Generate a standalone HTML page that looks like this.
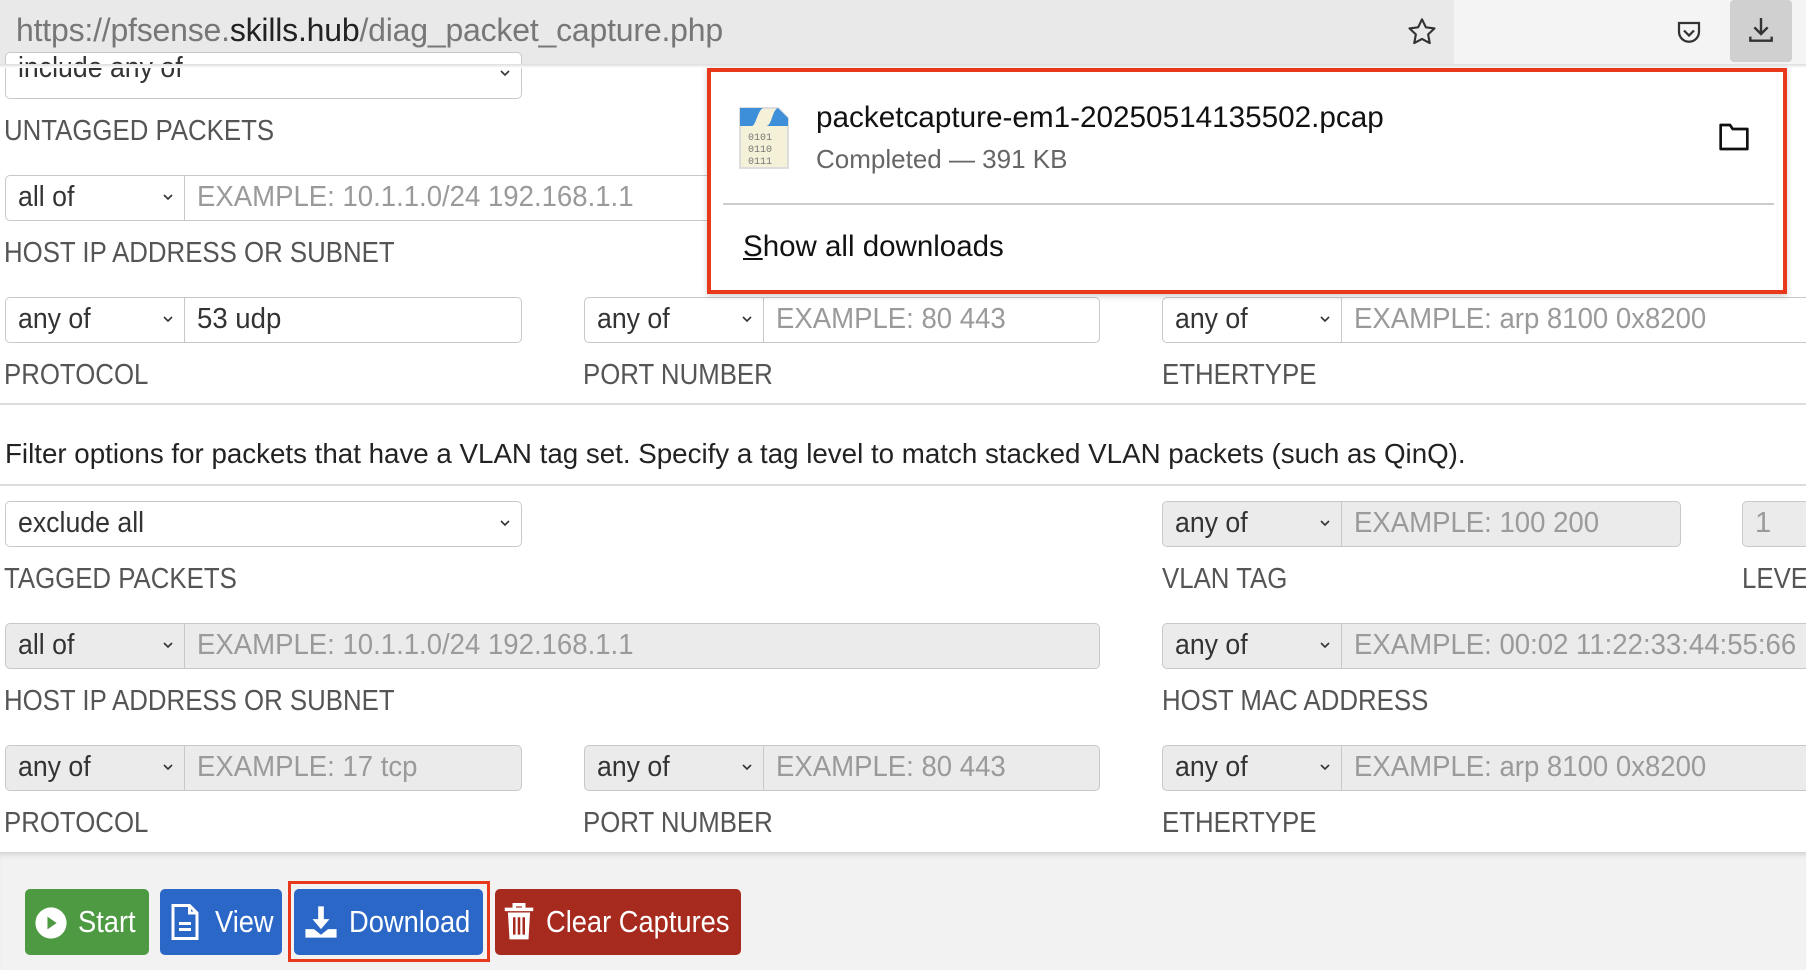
<!DOCTYPE html>
<html><head><meta charset="utf-8"><style>
*{box-sizing:border-box;margin:0;padding:0}
body{width:1806px;height:970px;overflow:hidden;background:#fff;position:relative;font-family:"Liberation Sans",sans-serif;}
.a{position:absolute}
.sel,.inp{position:absolute;height:46px;border:1.5px solid #c8c8c8;background:#fff;font-size:29px;line-height:43px;padding-left:12px;color:#333;white-space:nowrap;overflow:hidden}
.sel{border-radius:5px 0 0 5px}
.inp{border-radius:0 5px 5px 0;color:#9a9a9a;border-left:none}
.inp.full{border-left:1.5px solid #c8c8c8;border-radius:5px}
.sel.full{border-radius:5px}
.g{background:#ebebeb}
.chev{position:absolute;right:10px;top:15px;width:12px;height:12px}
.lab{position:absolute;font-size:29px;color:#555;white-space:nowrap;transform:scaleX(.89);transform-origin:left}
.t{display:inline-block;transform:scaleX(.95);transform-origin:left}
.ts{display:inline-block;transform:scaleX(.92);transform-origin:left}
.btn{position:absolute;top:889px;height:66px;border-radius:5px;color:#fff;font-size:31px;line-height:66px;white-space:nowrap}
.btn span{transform:scaleX(.88);transform-origin:left}
</style></head><body>
<!-- url bar -->
<div class="a" style="left:0;top:0;width:1454px;height:64px;background:#e9e9e9"></div>
<div class="a" style="left:1454px;top:0;width:352px;height:64px;background:#f4f4f4"></div>
<div class="a" style="left:16px;top:12px;font-size:32px;color:#777;white-space:nowrap;letter-spacing:-0.2px">https://pfsense.<span style="color:#222">skills.hub</span>/diag_packet_capture.php</div>
<svg class="a" style="left:1406px;top:16px" width="32" height="32" viewBox="0 0 24 24"><path d="M12 2.5l2.9 6 6.5.8-4.8 4.5 1.2 6.5L12 17.2l-5.8 3.1 1.2-6.5L2.6 9.3l6.5-.8z" fill="none" stroke="#333" stroke-width="1.6" stroke-linejoin="round"/></svg>
<svg class="a" style="left:1674px;top:18px" width="30" height="30" viewBox="0 0 24 24"><path d="M4 4h16v7a8 8 0 0 1-16 0z" fill="none" stroke="#333" stroke-width="1.8"/><path d="M8 10l4 4 4-4" fill="none" stroke="#333" stroke-width="1.8"/></svg>
<div class="a" style="left:1730px;top:0;width:62px;height:62px;background:#d0d0d0;border-radius:4px"></div>
<svg class="a" style="left:1745px;top:14px" width="32" height="32" viewBox="0 0 24 24"><path d="M12 3v12M7 10l5 5 5-5M4 17v3h16v-3" fill="none" stroke="#333" stroke-width="1.8"/></svg>

<!-- row 0 partial -->
<div class="sel full" style="left:5px;top:52px;width:517px;height:47px;line-height:30px"><span class="ts">include any of</span><svg class="chev" viewBox="0 0 12 12" style="top:14px"><path d="M2 4l4 4 4-4" fill="none" stroke="#333" stroke-width="1.6"/></svg></div>
<div class="a" style="left:0;top:64px;width:1806px;height:4px;background:linear-gradient(#ddd,#fff)"></div>
<div class="lab" style="left:4px;top:115px">UNTAGGED PACKETS</div>

<!-- row 1 -->
<div class="sel" style="left:5px;top:175px;width:180px"><span class="ts">all of</span><svg class="chev" viewBox="0 0 12 12"><path d="M2 4l4 4 4-4" fill="none" stroke="#333" stroke-width="1.6"/></svg></div>
<div class="inp" style="left:185px;top:175px;width:915px"><span class="t">EXAMPLE: 10.1.1.0/24 192.168.1.1</span></div>
<div class="lab" style="left:4px;top:237px">HOST IP ADDRESS OR SUBNET</div>

<!-- row 2 -->
<div class="sel" style="left:5px;top:297px;width:180px"><span class="ts">any of</span><svg class="chev" viewBox="0 0 12 12"><path d="M2 4l4 4 4-4" fill="none" stroke="#333" stroke-width="1.6"/></svg></div>
<div class="inp" style="left:185px;top:297px;width:337px;color:#333"><span class="t">53 udp</span></div>
<div class="sel" style="left:584px;top:297px;width:180px"><span class="ts">any of</span><svg class="chev" viewBox="0 0 12 12"><path d="M2 4l4 4 4-4" fill="none" stroke="#333" stroke-width="1.6"/></svg></div>
<div class="inp" style="left:764px;top:297px;width:336px"><span class="t">EXAMPLE: 80 443</span></div>
<div class="sel" style="left:1162px;top:297px;width:180px"><span class="ts">any of</span><svg class="chev" viewBox="0 0 12 12"><path d="M2 4l4 4 4-4" fill="none" stroke="#333" stroke-width="1.6"/></svg></div>
<div class="inp" style="left:1342px;top:297px;width:500px"><span class="t">EXAMPLE: arp 8100 0x8200</span></div>
<div class="lab" style="left:4px;top:359px">PROTOCOL</div>
<div class="lab" style="left:583px;top:359px">PORT NUMBER</div>
<div class="lab" style="left:1162px;top:359px">ETHERTYPE</div>
<div class="a" style="left:0;top:403px;width:1806px;height:2px;background:#ddd"></div>
<div class="a" style="left:5px;top:438px;font-size:28px;color:#222;white-space:nowrap;transform:scaleX(.99);transform-origin:left">Filter options for packets that have a VLAN tag set. Specify a tag level to match stacked VLAN packets (such as QinQ).</div>
<div class="a" style="left:0;top:484px;width:1806px;height:2px;background:#ddd"></div>

<!-- row 4 -->
<div class="sel full" style="left:5px;top:501px;width:517px"><span class="ts">exclude all</span><svg class="chev" viewBox="0 0 12 12"><path d="M2 4l4 4 4-4" fill="none" stroke="#333" stroke-width="1.6"/></svg></div>
<div class="sel g" style="left:1162px;top:501px;width:180px"><span class="ts">any of</span><svg class="chev" viewBox="0 0 12 12"><path d="M2 4l4 4 4-4" fill="none" stroke="#333" stroke-width="1.6"/></svg></div>
<div class="inp g" style="left:1342px;top:501px;width:339px"><span class="t">EXAMPLE: 100 200</span></div>
<div class="inp g full" style="left:1742px;top:501px;width:100px">1</div>
<div class="lab" style="left:4px;top:563px">TAGGED PACKETS</div>
<div class="lab" style="left:1162px;top:563px">VLAN TAG</div>
<div class="lab" style="left:1742px;top:563px">LEVEL</div>

<!-- row 5 -->
<div class="sel g" style="left:5px;top:623px;width:180px"><span class="ts">all of</span><svg class="chev" viewBox="0 0 12 12"><path d="M2 4l4 4 4-4" fill="none" stroke="#333" stroke-width="1.6"/></svg></div>
<div class="inp g" style="left:185px;top:623px;width:915px"><span class="t">EXAMPLE: 10.1.1.0/24 192.168.1.1</span></div>
<div class="sel g" style="left:1162px;top:623px;width:180px"><span class="ts">any of</span><svg class="chev" viewBox="0 0 12 12"><path d="M2 4l4 4 4-4" fill="none" stroke="#333" stroke-width="1.6"/></svg></div>
<div class="inp g" style="left:1342px;top:623px;width:500px"><span class="t">EXAMPLE: 00:02 11:22:33:44:55:66</span></div>
<div class="lab" style="left:4px;top:685px">HOST IP ADDRESS OR SUBNET</div>
<div class="lab" style="left:1162px;top:685px">HOST MAC ADDRESS</div>

<!-- row 6 -->
<div class="sel g" style="left:5px;top:745px;width:180px"><span class="ts">any of</span><svg class="chev" viewBox="0 0 12 12"><path d="M2 4l4 4 4-4" fill="none" stroke="#333" stroke-width="1.6"/></svg></div>
<div class="inp g" style="left:185px;top:745px;width:337px"><span class="t">EXAMPLE: 17 tcp</span></div>
<div class="sel g" style="left:584px;top:745px;width:180px"><span class="ts">any of</span><svg class="chev" viewBox="0 0 12 12"><path d="M2 4l4 4 4-4" fill="none" stroke="#333" stroke-width="1.6"/></svg></div>
<div class="inp g" style="left:764px;top:745px;width:336px"><span class="t">EXAMPLE: 80 443</span></div>
<div class="sel g" style="left:1162px;top:745px;width:180px"><span class="ts">any of</span><svg class="chev" viewBox="0 0 12 12"><path d="M2 4l4 4 4-4" fill="none" stroke="#333" stroke-width="1.6"/></svg></div>
<div class="inp g" style="left:1342px;top:745px;width:500px"><span class="t">EXAMPLE: arp 8100 0x8200</span></div>
<div class="lab" style="left:4px;top:807px">PROTOCOL</div>
<div class="lab" style="left:583px;top:807px">PORT NUMBER</div>
<div class="lab" style="left:1162px;top:807px">ETHERTYPE</div>

<!-- bottom -->
<div class="a" style="left:0;top:852px;width:1806px;height:118px;background:#f2f2f2;box-shadow:inset 0 6px 6px -4px #ccc"></div>
<div class="btn" style="left:25px;width:124px;background:#4e9a43">
 <svg class="a" style="left:9px;top:17px" width="34" height="34" viewBox="0 0 24 24"><circle cx="12" cy="12" r="11" fill="#fff"/><path d="M9.5 7.5l6.5 4.5-6.5 4.5z" fill="#4e9a43"/></svg>
 <span class="a" style="left:53px">Start</span></div>
<div class="btn" style="left:160px;width:122px;background:#2b67c6">
 <svg class="a" style="left:10px;top:15px" width="30" height="36" viewBox="0 0 20 24"><path d="M2 1h11l5 5v17H2z M13 1v5h5" fill="none" stroke="#fff" stroke-width="2"/><path d="M6 13h8M6 17h8" stroke="#fff" stroke-width="2"/></svg>
 <span class="a" style="left:55px">View</span></div>
<div class="a" style="left:288px;top:881px;width:202px;height:81px;border:3px solid #e8391d"></div>
<div class="btn" style="left:294px;width:189px;background:#2b67c6">
 <svg class="a" style="left:10px;top:16px" width="34" height="34" viewBox="0 0 24 24"><path d="M10 1h4v9h4l-6 7-6-7h4z" fill="#fff"/><path d="M1 17h6l5 4 5-4h6v6H1z" fill="#fff"/></svg>
 <span class="a" style="left:55px">Download</span></div>
<div class="btn" style="left:495px;width:246px;background:#a62a1e">
 <svg class="a" style="left:8px;top:14px" width="32" height="38" viewBox="0 0 20 24"><path d="M1 4h18M7 4V1h6v3" fill="none" stroke="#fff" stroke-width="2.2"/><path d="M3 6h14l-1 17H4z" fill="#fff"/><path d="M7 9v11M10 9v11M13 9v11" stroke="#a62a1e" stroke-width="1.6"/></svg>
 <span class="a" style="left:51px">Clear Captures</span></div>

<!-- popup -->
<div class="a" style="left:707px;top:68px;width:1080px;height:226px;background:#fff;border:4px solid #e8391d;box-shadow:0 2px 6px rgba(0,0,0,.2)"></div>
<svg class="a" style="left:738px;top:106px" width="52" height="64" viewBox="0 0 26 32"><path d="M1 1h19l5 5v25H1z" fill="#f4f1d8" stroke="#ddd"/><path d="M1 1h12c-3 0-4 9-6 9H1z" fill="#3d8fd9"/><path d="M14 10c3 0 3-8 6-9l5 5v4z" fill="#3d8fd9"/><text x="5" y="17" font-size="5" font-family="Liberation Mono" fill="#777">0101</text><text x="5" y="23" font-size="5" font-family="Liberation Mono" fill="#777">0110</text><text x="5" y="29" font-size="5" font-family="Liberation Mono" fill="#777">0111</text></svg>
<div class="a" style="left:816px;top:101px;font-size:29.7px;color:#111;white-space:nowrap">packetcapture-em1-20250514135502.pcap</div>
<div class="a" style="left:816px;top:144px;font-size:26px;color:#666;white-space:nowrap">Completed — 391 KB</div>
<svg class="a" style="left:1718px;top:122px" width="32" height="30" viewBox="0 0 24 22"><path d="M2 2h7l2 3h11v15H2z" fill="none" stroke="#111" stroke-width="2" stroke-linejoin="round"/></svg>
<div class="a" style="left:723px;top:203px;width:1051px;height:2px;background:#ccc"></div>
<div class="a" style="left:743px;top:230px;font-size:29.5px;color:#111;white-space:nowrap"><u>S</u>how all downloads</div>
</body></html>
